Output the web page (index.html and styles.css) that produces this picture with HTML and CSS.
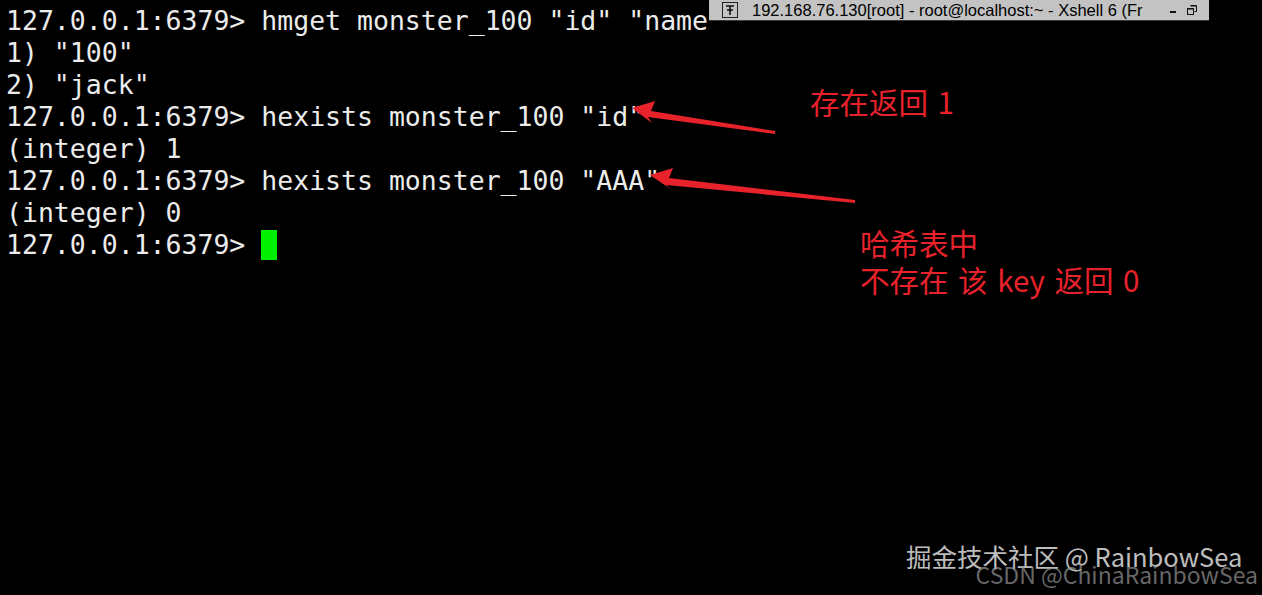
FILE: index.html
```html
<!DOCTYPE html>
<html lang="zh">
<head>
<meta charset="utf-8">
<title>Xshell</title>
<link rel="stylesheet" href="styles.css">
</head>
<body>
<div class="screen">
<pre class="term"><span class="line">127.0.0.1:6379&gt; hmget monster_100 "id" "name"</span>
<span class="line">1) "100"</span>
<span class="line">2) "jack"</span>
<span class="line">127.0.0.1:6379&gt; hexists monster_100 "id"</span>
<span class="line">(integer) 1</span>
<span class="line">127.0.0.1:6379&gt; hexists monster_100 "AAA"</span>
<span class="line">(integer) 0</span>
<span class="line">127.0.0.1:6379&gt; <span class="cursor"> </span></span></pre>

  <div class="titlebar">
    <span class="pin">
      <svg width="16" height="16" viewBox="0 0 16 16"><rect x="0.5" y="0.5" width="15" height="15" fill="none" stroke="#222"/><path d="M4 4h8M8 4v9M5 8h6" stroke="#111" stroke-width="1.6" fill="none"/></svg>
    </span>
    <span class="title">192.168.76.130[root] - root@localhost:~ - Xshell 6 (Fr</span>
    <span class="controls">
      <svg width="10" height="10" viewBox="0 0 10 10"><rect x="1" y="6" width="6" height="2" fill="#111"/></svg>
      <svg width="10" height="10" viewBox="0 0 10 10"><path d="M3.5 0.5h6v6h-2" fill="none" stroke="#111"/><rect x="0.5" y="3.5" width="6" height="6" fill="none" stroke="#111"/><path d="M3.5 1h6M0.5 4h6" stroke="#111"/></svg>
    </span>
  </div>

  <svg class="arrows" width="1262" height="595" viewBox="0 0 1262 595">
    <polygon points="632,108 655,101 651,111 775,131 775,134 648,117 652,123" fill="#e8222b"/>
    <polygon points="650,175 673,168 669,178 855,200 855,203 666,185 672,190" fill="#e8222b"/>
  </svg>

  <div class="note note-1">存在返回 1</div>
  <div class="note note-2"><div>哈希表中</div><div>不存在 该 key 返回 0</div></div>

  <div class="watermark">
    <span class="wm-juejin">掘金技术社区 @ RainbowSea</span>
    <span class="wm-csdn">CSDN @ChinaRainbowSea</span>
  </div>
</div>
</body>
</html>
```

FILE: styles.css
```css
html, body {
  margin: 0;
  padding: 0;
  background: #000;
}

.screen {
  position: relative;
  width: 1262px;
  height: 595px;
  overflow: hidden;
  background: #000;
}

.term {
  margin: 0;
  padding: 5px 0 0 6px;
  font-family: "DejaVu Sans Mono", monospace;
  font-size: 26.5px;
  line-height: 32px;
  color: #ececec;
  white-space: pre;
}

.cursor {
  display: inline-block;
  width: 16px;
  height: 30px;
  background: #00f000;
  vertical-align: -1px;
}

.titlebar {
  position: absolute;
  left: 709px;
  top: 0;
  width: 500px;
  height: 20px;
  background: #c3c3c3;
  border-bottom: 1px solid #3a3a3a;
  display: flex;
  align-items: center;
  font-family: "Liberation Sans", Arial, sans-serif;
  font-size: 16.5px;
  color: #000;
}

.pin {
  display: flex;
  margin-left: 13px;
}

.title {
  margin-left: 14px;
  white-space: nowrap;
  flex: 1;
}

.controls {
  display: flex;
  gap: 8px;
  margin-right: 12px;
  align-items: center;
}

.arrows {
  position: absolute;
  left: 0;
  top: 0;
  pointer-events: none;
}

.note {
  position: absolute;
  font-family: "Noto Sans CJK SC", "Microsoft YaHei", sans-serif;
  font-size: 29.5px;
  line-height: 37px;
  word-spacing: 3px;
  color: #e8222b;
  white-space: nowrap;
}

.note-1 {
  left: 810px;
  top: 83px;
}

.note-2 {
  left: 860px;
  top: 224px;
  display: flex;
  flex-direction: column;
}

.watermark {
  position: absolute;
  right: 4px;
  bottom: 2px;
  width: 350px;
  height: 50px;
}

.wm-juejin {
  position: absolute;
  left: -2px;
  top: -2px;
  font-family: "Noto Sans CJK SC", sans-serif;
  font-size: 25.5px;
  line-height: 30px;
  color: rgba(225, 225, 225, 0.85);
  white-space: nowrap;
}

.wm-csdn {
  position: absolute;
  right: 0;
  top: 17px;
  font-family: "Noto Sans CJK SC", sans-serif;
  font-size: 23px;
  line-height: 28px;
  color: rgba(150, 150, 150, 0.7);
  white-space: nowrap;
}
```
